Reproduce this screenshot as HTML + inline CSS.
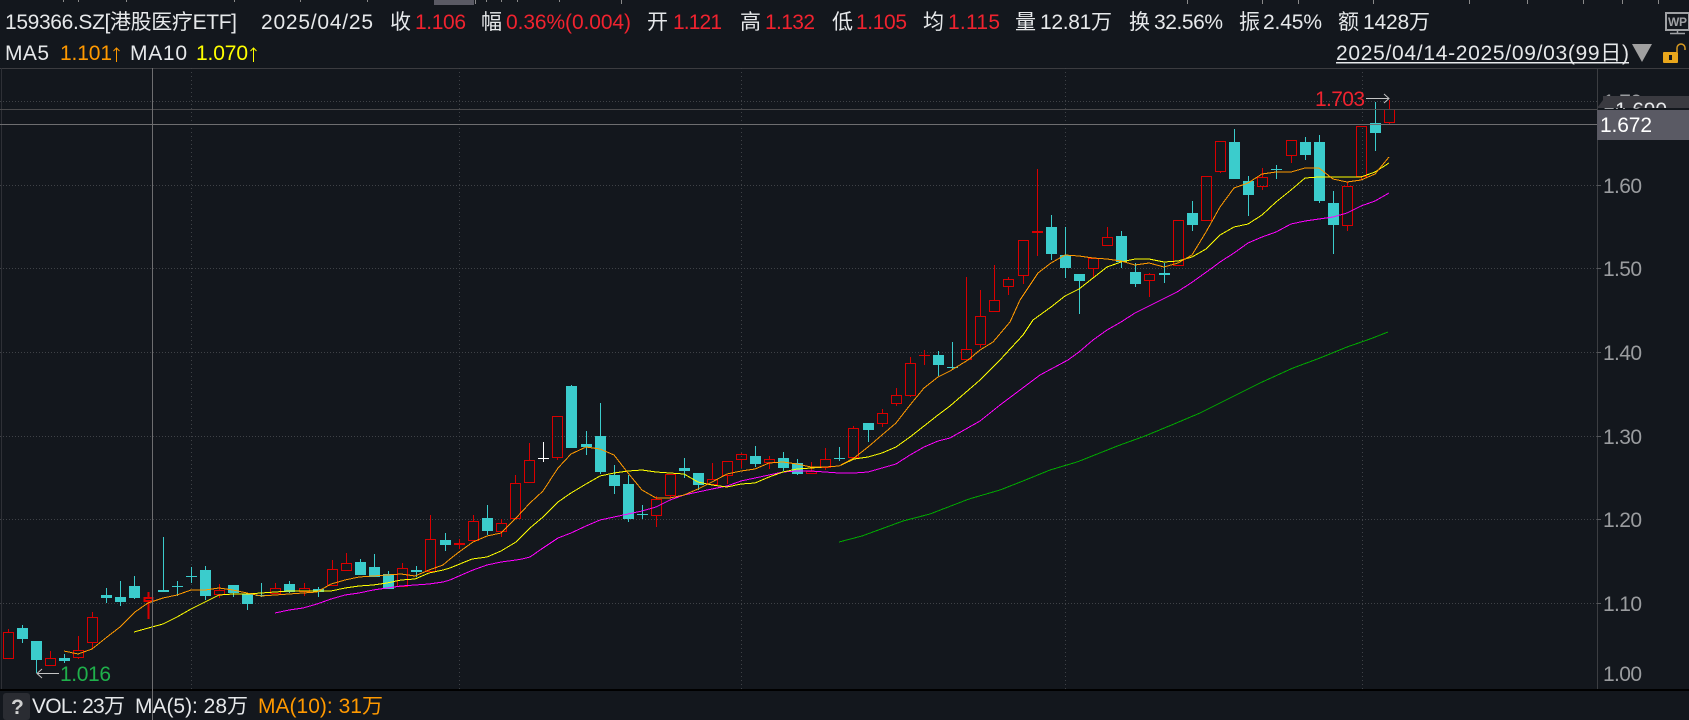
<!DOCTYPE html>
<html><head><meta charset="utf-8"><title>159366.SZ</title>
<style>
html,body{margin:0;padding:0;background:#13171d;width:1689px;height:720px;overflow:hidden}
svg{display:block}
text{font-family:"Liberation Sans","Noto Sans CJK SC",sans-serif;font-size:21px}
.w{fill:#e6e8ea}.r{fill:#f0232f}.g{fill:#9a9c9f}
</style></head><body>
<svg width="1689" height="720" viewBox="0 0 1689 720" xmlns="http://www.w3.org/2000/svg">
<rect width="1689" height="720" fill="#13171d"/>
<!-- top strip -->
<rect x="434" y="0" width="40" height="5" fill="#5a5a64"/>
<path d="M63.5 0v2M78.5 0v2M126.5 0v2M234.5 0v2M300.5 0v2M367.5 0v2M475.5 0v4M486.5 0v2M501.5 0v2M517.5 0v2M559.5 0v2M621.5 0v4M1187.5 0v4M1262.5 0v4M1298.5 0v4M1373.5 0v4M1469.5 0v4M1527.5 0v4M1583.5 0v4M1622.5 0v4M1658.5 0v4" stroke="#8a8a8a" fill="none" shape-rendering="crispEdges"/>
<!-- frame -->
<g shape-rendering="crispEdges" fill="none">
<path d="M0 68.5H1689" stroke="#3c3c40"/>
<path d="M1.5 68V689" stroke="#2e3036"/>
<path d="M1597.5 68V689" stroke="#3c3e42"/>
<path d="M0 101.5H1597M0 185.5H1597M0 268.5H1597M0 352.5H1597M0 436.5H1597M0 519.5H1597M0 603.5H1597" stroke="#3f4247" stroke-dasharray="1 2"/>
<path d="M191.5 68V689M459.5 68V689M741.5 68V689M1065.5 68V689M1362.5 68V689" stroke="#3f4247" stroke-dasharray="1 3"/>
<path d="M1597 185.5h4M1597 268.5h4M1597 352.5h4M1597 436.5h4M1597 519.5h4M1597 603.5h4" stroke="#55575b"/>
<path d="M0 690H1689" stroke="#000" stroke-width="2"/>
</g>
<!-- candles -->
<g fill="none" shape-rendering="crispEdges">
<path stroke="#d80000" d="M3.5 632.5h10v26h-10zM8.5 629v3
M45.5 658.5h10v7h-10zM50.5 651v7
M73.5 650.5h10v7h-10zM78.5 636v14M78.5 657v2
M87.5 617.5h10v25h-10zM92.5 612v5M92.5 642v7
M214.5 590.5h10v4h-10zM219.5 584v6M219.5 594v4
M270.5 588.5h10v5h-10zM275.5 583v5M275.5 593v1
M299.5 588.5h10v3h-10zM304.5 583v5M304.5 591v5
M327.5 569.5h10v16h-10zM332.5 560v9M332.5 585v1
M341.5 563.5h10v7h-10zM346.5 553v10M346.5 570v1
M397.5 568.5h10v18h-10zM402.5 563v5
M425.5 539.5h10v32h-10zM430.5 515v24
M468.5 521.5h10v19h-10zM473.5 515v6
M496.5 523.5h10v8h-10zM501.5 519v4M501.5 531v6
M510.5 483.5h10v35h-10zM515.5 475v8
M524.5 460.5h10v22h-10zM529.5 443v17
M552.5 416.5h10v41h-10zM557.5 457v3
M651.5 499.5h10v16h-10zM656.5 496v3M656.5 515v12
M665.5 474.5h10v21h-10zM670.5 495v3
M707.5 479.5h10v5h-10zM712.5 463v16M712.5 484v1
M722.5 461.5h10v14h-10zM727.5 475v9
M736.5 454.5h10v5h-10zM741.5 453v1M741.5 459v9
M764.5 459.5h10v3h-10zM769.5 456v3M769.5 462v7
M806.5 471.5h10v2h-10zM811.5 462v9
M820.5 459.5h10v8h-10zM825.5 448v11M825.5 467v3
M848.5 428.5h10v29h-10zM853.5 426v2
M877.5 413.5h10v10h-10zM882.5 409v4M882.5 423v4
M891.5 395.5h10v8h-10zM896.5 388v7M896.5 403v3
M905.5 363.5h10v32h-10zM910.5 357v6M910.5 395v2
M961.5 349.5h10v10h-10zM966.5 277v72
M975.5 316.5h10v28h-10zM980.5 290v26M980.5 344v4
M989.5 300.5h10v11h-10zM994.5 265v35M994.5 311v1
M1003.5 279.5h10v7h-10zM1008.5 277v2M1008.5 286v9
M1018.5 240.5h10v35h-10zM1023.5 275v9
M1088.5 258.5h10v10h-10zM1093.5 268v9
M1102.5 237.5h10v8h-10zM1107.5 227v10M1107.5 245v1
M1144.5 274.5h10v6h-10zM1149.5 273v1M1149.5 280v17
M1173.5 220.5h10v45h-10z
M1201.5 176.5h10v44h-10zM1206.5 220v1
M1215.5 141.5h10v30h-10zM1220.5 171v2
M1257.5 177.5h10v9h-10zM1262.5 168v9M1262.5 186v4
M1286.5 140.5h10v15h-10zM1291.5 155v8
M1342.5 186.5h10v39h-10zM1347.5 182v4M1347.5 225v6
M1356.5 126.5h10v50h-10zM1361.5 176v4
M1384.5 109.5h10v13h-10zM1389.5 100v9M1389.5 122v2
M919 355.5h11M924.5 350v15"/>
<path stroke="#d80000" stroke-width="2" d="M144.5 598h8v3h-8zM148.5 592v5M148.5 602v17"/>
<path stroke="#d80000" d="M459.5 539v10M1037.5 169v87"/>
<path fill="#d80000" d="M454 543h11v2h-11zM1032 231h11v2h-11z"/>
<path stroke="#3bcccc" d="M22.5 625v18M36.5 660v13M64.5 654v9M106.5 588v15M120.5 581v25M134.5 576v23M163.5 537v55M177.5 581v15M191.5 567v16M205.5 566v34M233.5 593v4M247.5 604v6M261.5 583v14M289.5 581v12M318.5 587v10M360.5 559v16M374.5 554v23M388.5 571v18M416.5 566v11M445.5 533v18M487.5 505v30M571.5 385v3M586.5 431v24M600.5 403v71M614.5 465v29M628.5 475v47M642.5 505v14M684.5 458v20M698.5 485v5M755.5 446v21M783.5 452v19M797.5 459v16M839.5 447v14M868.5 430v12M938.5 351v25M952.5 342v27M1051.5 215v45M1065.5 227v51M1079.5 281v33M1121.5 231v37M1135.5 263v24M1164.5 263v20M1192.5 201v30M1234.5 129v13M1248.5 176v40M1276.5 165v14M1305.5 137v23M1319.5 135v68M1333.5 191v63M1375.5 102v49"/>
<path fill="#3bcccc" d="M17 628h11v11H17zM31 641h11v19H31zM59 658h11v3H59zM101 595h11v3h-11zM115 597h11v5h-11zM129 586h11v12h-11zM158 590h11v2h-11zM172 586h11v1h-11zM186 576h11v1h-11zM200 570h11v26h-11zM228 585h11v8h-11zM242 594h11v10h-11zM256 595h11v1h-11zM284 584h11v8h-11zM313 589h11v3h-11zM355 562h11v13h-11zM369 567h11v10h-11zM383 574h11v15h-11zM411 570h11v2h-11zM440 540h11v5h-11zM482 518h11v13h-11zM566 386h11v62h-11zM581 444h11v3h-11zM595 436h11v36h-11zM609 475h11v11h-11zM623 484h11v35h-11zM637 514h11v1h-11zM679 468h11v3h-11zM693 473h11v12h-11zM750 456h11v8h-11zM778 458h11v10h-11zM792 463h11v11h-11zM834 458h11v1h-11zM863 423h11v7h-11zM933 355h11v10h-11zM947 367h11v1h-11zM1046 227h11v27h-11zM1060 255h11v13h-11zM1074 274h11v7h-11zM1116 236h11v26h-11zM1130 272h11v12h-11zM1159 273h11v2h-11zM1187 213h11v12h-11zM1229 142h11v37h-11zM1243 181h11v14h-11zM1271 169h11v1h-11zM1300 142h11v13h-11zM1314 142h11v59h-11zM1328 203h11v22h-11zM1370 123h11v10h-11z"/>
<path stroke="#fff" d="M538 458.5h11M543.5 442v20"/>
</g>
<!-- moving averages -->
<g fill="none" shape-rendering="crispEdges" stroke-linejoin="round">
<polyline stroke="#00a800" points="839,542 862,536 903,521 930,514 969,499 1000,490 1023,481 1050,470 1077,462 1120,445 1145,436 1174,424 1200,413 1228,399 1260,383 1293,368 1320,358 1347,347 1370,339 1388,332"/>
<polyline stroke="#ff00ff" points="275,613 289,610 303,608 317,604 331,599 345,595 359,593 373,590 387,588 401,586 415,585 429,584 443,582 450,580 459,576 473,570 487,565 501,562 516,560 522,559 530,557 543,548 558,538 571,533 586,526 600,520 614,517 628,514 642,511 656,507 670,500 684,495 698,492 712,489 727,486 741,481 755,478 769,475 783,472 797,471 811,471 825,472 839,473 854,473 868,472 882,468 896,464 910,455 924,447 938,441 950,438 980,421 1000,405 1020,390 1040,375 1068,360 1079,352 1093,340 1107,330 1121,322 1135,313 1149,306 1163,299 1177,292 1191,283 1205,273 1212,268 1220,262 1234,253 1248,243 1262,237 1276,232 1291,224 1305,221 1319,219 1333,217 1347,213 1361,206 1375,201 1389,193"/>
<polyline stroke="#ffff00" points="134,632 152,627 163,624 177,617 191,609 205,602 219,595 233,594 247,594 261,593 275,592 289,591 303,591 317,591 331,591 345,588 359,586 373,585 387,583 401,580 415,579 429,573 443,570 450,568 472,559 487,557 501,551 516,542 530,528 543,517 558,502 571,493 586,484 600,476 614,473 628,471 642,470 656,472 670,473 684,474 698,482 712,485 727,487 741,484 755,483 769,477 783,472 797,469 811,468 825,467 839,466 854,459 868,457 882,453 896,447 910,437 924,426 938,415 950,406 980,380 1000,360 1011,348 1023,335 1033,320 1051,307 1065,296 1079,289 1093,278 1107,267 1121,262 1135,259 1149,259 1164,262 1178,261 1192,257 1206,249 1220,235 1234,227 1248,224 1262,215 1276,202 1291,190 1305,178 1319,177 1333,177 1347,177 1361,177 1375,172 1389,163"/>
<polyline stroke="#ff9900" points="64,651 78,654 92,649 107,637 120,627 135,612 148,603 163,598 177,595 191,590 205,590 219,588 233,590 247,593 261,596 275,595 289,594 303,593 317,592 331,584 345,580 359,577 373,576 387,575 401,574 415,576 429,570 443,565 450,559 459,552 473,542 487,536 501,533 516,518 530,503 543,491 558,468 571,454 586,447 600,449 614,455 628,473 642,490 656,498 670,498 684,495 698,489 712,482 727,474 741,471 755,469 769,463 783,462 797,464 811,467 825,467 839,466 854,458 868,447 882,435 896,423 910,405 924,388 938,377 950,371 968,360 980,350 993,342 1010,322 1020,300 1038,273 1051,263 1065,255 1079,256 1093,258 1107,259 1121,261 1135,265 1149,263 1164,267 1178,263 1192,255 1206,232 1220,207 1234,188 1248,183 1262,174 1276,172 1291,172 1305,168 1319,168 1333,179 1347,182 1361,180 1375,174 1389,157"/>
</g>
<!-- crosshair -->
<g fill="none" shape-rendering="crispEdges">
<path d="M0 109.5H1597" stroke="#4a4a4c"/>
<path d="M0 124.5H1597" stroke="#6e6e70"/>
<path d="M152.5 68V720" stroke="#6e6e70"/>
</g>
<!-- header text -->
<text class="w" x="5" y="29" textLength="232">159366.SZ[港股医疗ETF]</text>
<text class="w" x="261" y="29" textLength="112">2025/04/25</text>
<text class="w" x="390" y="29">收</text><text class="r" x="415" y="29" textLength="51">1.106</text>
<text class="w" x="481" y="29">幅</text><text class="r" x="506" y="29" textLength="125">0.36%(0.004)</text>
<text class="w" x="647" y="29">开</text><text class="r" x="673" y="29" textLength="49">1.121</text>
<text class="w" x="740" y="29">高</text><text class="r" x="765" y="29" textLength="50">1.132</text>
<text class="w" x="832" y="29">低</text><text class="r" x="856" y="29" textLength="51">1.105</text>
<text class="w" x="923" y="29">均</text><text class="r" x="948" y="29" textLength="52">1.115</text>
<text class="w" x="1015" y="29">量</text><text class="w" x="1040" y="29" textLength="72">12.81万</text>
<text class="w" x="1129" y="29">换</text><text class="w" x="1154" y="29" textLength="69">32.56%</text>
<text class="w" x="1239" y="29">振</text><text class="w" x="1263" y="29" textLength="59">2.45%</text>
<text class="w" x="1338" y="29">额</text><text class="w" x="1363" y="29" textLength="67">1428万</text>
<!-- WP icon -->
<g fill="none" stroke="#a0a2a5">
<rect x="1666" y="13" width="23" height="17" stroke-width="2"/>
<path d="M1677.5 30v3M1670 33.5h15" stroke-width="1.5"/>
</g>
<text x="1668" y="26" style="font-size:12px;font-weight:bold" fill="#a0a2a5" textLength="19">WP</text>
<!-- second row -->
<text class="w" x="5" y="60" textLength="44">MA5</text>
<text x="60" y="60" fill="#ff9900" textLength="52">1.101</text>
<path d="M116.5 62V48M113.5 51l3-3 3 3" stroke="#ff9900" fill="none"/>
<text class="w" x="130" y="60" textLength="57">MA10</text>
<text x="196" y="60" fill="#ffff00" textLength="52">1.070</text>
<path d="M253.5 62V48M250.5 51l3-3 3 3" stroke="#ffff00" fill="none"/>
<text class="w" x="1336" y="60" textLength="293">2025/04/14-2025/09/03(99日)</text>
<rect x="1336" y="62" width="293" height="1.5" fill="#e6e8ea"/>
<polygon points="1632,44 1652,44 1642,62" fill="#a0a0a0"/>
<!-- lock -->
<rect x="1663" y="52" width="15" height="11" rx="1" fill="#e8a61c"/>
<rect x="1669" y="55" width="3" height="5" fill="#13171d"/>
<path d="M1677 52v-4a4 4 0 0 1 8 0v2" fill="none" stroke="#d89a20" stroke-width="1.5"/>
<!-- price axis -->
<text class="g" x="1603" y="193" textLength="39">1.60</text>
<text class="g" x="1603" y="276" textLength="39">1.50</text>
<text class="g" x="1603" y="360" textLength="39">1.40</text>
<text class="g" x="1603" y="444" textLength="39">1.30</text>
<text class="g" x="1603" y="527" textLength="39">1.20</text>
<text class="g" x="1603" y="611" textLength="39">1.10</text>
<text class="g" x="1603" y="681" textLength="39">1.00</text>
<!-- price tags -->
<text class="g" x="1603" y="109" textLength="39">1.70</text>
<polygon points="1597,108 1603,100 1603,96 1689,96 1689,108" fill="#3a3a40"/>
<clipPath id="tagclip"><rect x="1600" y="95" width="89" height="13"/></clipPath>
<text x="1615" y="117" fill="#e6e8ea" clip-path="url(#tagclip)" textLength="52">1.690</text>
<rect x="1597" y="110" width="92" height="30" fill="#5a5a64"/>
<text x="1600" y="132" fill="#fff" textLength="52">1.672</text>
<!-- high / low -->
<text class="r" x="1315" y="106" textLength="50">1.703</text>
<path d="M1366 98.5h23M1384 94l5 4.5-5 4.5" fill="none" stroke="#c4c4c4"/>
<text x="60" y="681" fill="#1fb04b" textLength="51">1.016</text>
<path d="M59 673.5H37M42 669l-5 4.5 5 4.5" fill="none" stroke="#c4c4c4"/>
<!-- bottom bar -->
<rect x="3" y="693" width="27" height="27" rx="3" fill="#2a2c32"/>
<text x="11" y="714" fill="#d0d0d0" style="font-weight:bold" textLength="11">?</text>
<text class="w" x="32" y="713" textLength="93">VOL: 23万</text>
<text class="w" x="135" y="713" textLength="113">MA(5): 28万</text>
<text x="258" y="713" fill="#ff9900" textLength="125">MA(10): 31万</text>
</svg>
</body></html>
